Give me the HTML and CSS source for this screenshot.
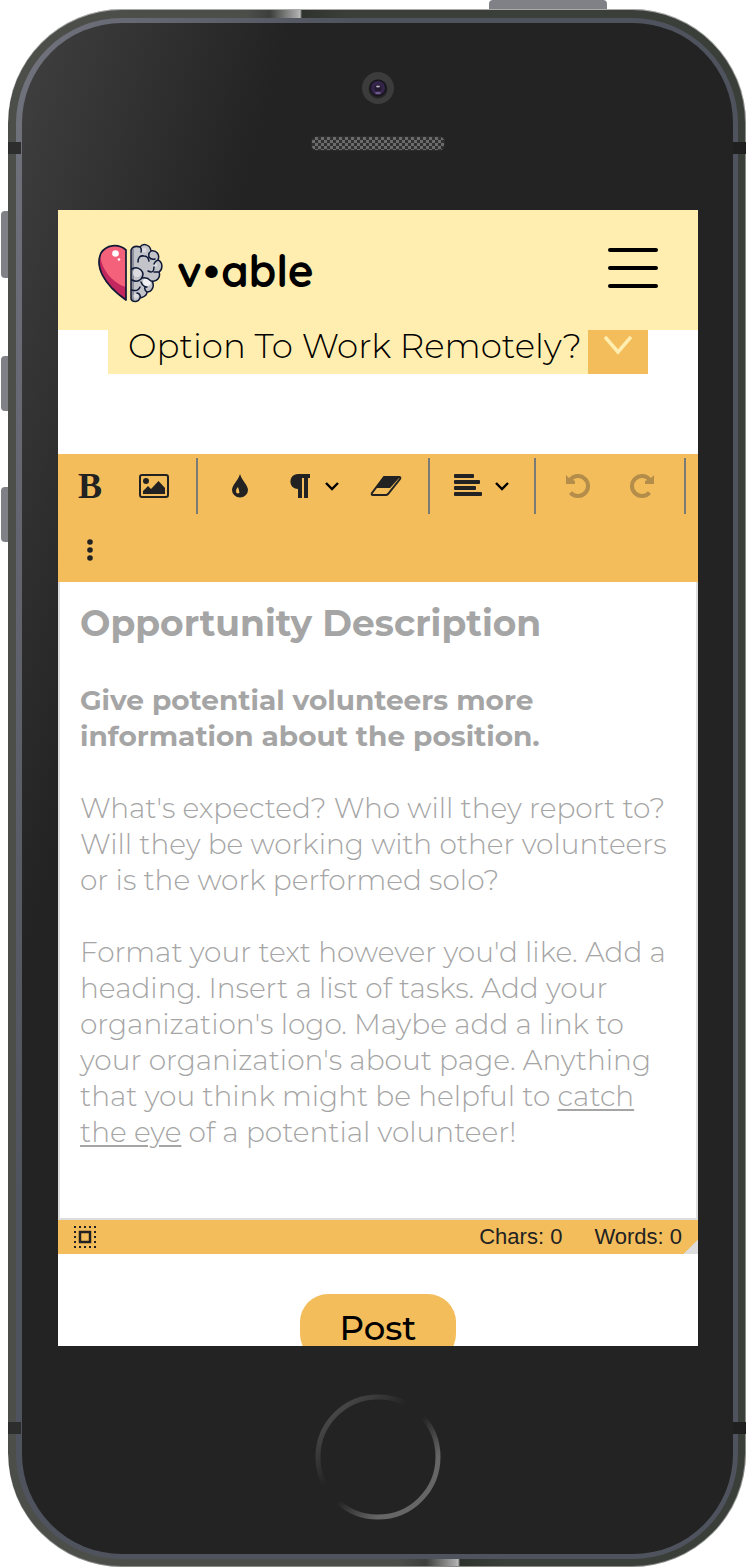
FILE: index.html
```html
<!DOCTYPE html>
<html lang="en">
<head>
<meta charset="utf-8">
<meta name="viewport" content="width=device-width, initial-scale=1">
<title>v•able – Post an opportunity</title>
<link rel="stylesheet" href="styles.css">
</head>
<body>
<div class="device">
  <span class="key key-power"></span>
  <span class="key key-mute"></span>
  <span class="key key-up"></span>
  <span class="key key-down"></span>
  <div class="ring">
    <div class="face">
      <div class="earpiece">
        <svg class="camera" viewBox="0 0 32 32" aria-hidden="true">
          <circle cx="16" cy="16" r="16" fill="#3c3c3c"/>
          <circle cx="16" cy="17" r="9.5" fill="#252427"/>
          <circle cx="16" cy="16" r="8.5" fill="#17151c"/>
          <circle cx="16" cy="16" r="7" fill="#35254d"/>
          <circle cx="16" cy="16" r="3.5" fill="#231a30"/>
          <ellipse cx="16" cy="21" rx="3" ry="1.3" fill="#6b5885"/>
          <ellipse cx="16" cy="14.5" rx="2" ry="1" fill="#b5aebd"/>
        </svg>
        <span class="speaker"></span>
      </div>
      <div class="screen">
        <header class="topbar">
          <a class="brand" href="#">
            <svg class="logo" viewBox="0 0 64 58" aria-hidden="true">
              <path d="M28 6C20-1 8 1 3 9C-3 22 5 40 28 56Z" fill="#f4617b"/>
              <path d="M2 11C4 27 15 39 28 43V56C6 41-3 24 2 11Z" fill="#c2275e"/>
              <path d="M28 6C20-1 8 1 3 9C-3 22 5 40 28 56Z" fill="none" stroke="#101936" stroke-width="1.7" stroke-linejoin="round"/>
              <circle cx="17.500" cy="9.500" r="3.300" fill="#fff"/><circle cx="21" cy="15.500" r="1.300" fill="#fff"/>
              <path d="M33 6C35 2 39 2 42 3C45-1 52 0 53 7C59 6 62 11 60 16C65 18 65 25 61 28C63 33 59 38 54 37C57 42 54 48 49 48C49 53 44 53 42 54C40 59 34 58 33 55Z" fill="#c3c4ca"/>
              <path d="M33 5H36V57L33 55Z" fill="#8c8f9b"/>
              <circle cx="39" cy="29" r="4" fill="#dcdce0"/><circle cx="49" cy="38" r="4" fill="#f0f0f2"/><circle cx="57" cy="21" r="2" fill="#dcdce0"/><circle cx="46" cy="6" r="2.500" fill="#dcdce0"/><circle cx="38" cy="52" r="2.500" fill="#dcdce0"/>
              <path d="M33 6C35 2 39 2 42 3C45-1 52 0 53 7C59 6 62 11 60 16C65 18 65 25 61 28C63 33 59 38 54 37C57 42 54 48 49 48C49 53 44 53 42 54C40 59 34 58 33 55ZM42 3Q44 5 43 8M53 7Q50 9 51 13Q53 16 57 15M40 18Q40 11 46 12Q50 12 51 17M60 16Q57 17 56 20M50 27Q56 30 56 23M61 28H56M34 25Q39 22 43 26Q47 30 43 35Q39 39 34 36M45 34Q49 33 53 37M43 38Q45 43 49 43M34 46Q40 48 42 43M49 48Q46 46 47 43M42 54Q43 50 39 49" fill="none" stroke="#101936" stroke-width="1.5" stroke-linejoin="round" stroke-linecap="round"/>
            </svg>
            <span class="wordmark">v<span class="dot">•</span>able</span>
          </a>
          <button class="menu" type="button" aria-label="Open menu"><span></span><span></span><span></span></button>
        </header>
        <div class="remote">
          <select class="remote-select" aria-label="Option To Work Remotely?">
            <option>Option To Work Remotely?</option>
          </select>
          <span class="remote-arrow"><svg viewBox="0 0 28 20" aria-hidden="true"><path d="M1 2L14 17L27 2" fill="none" stroke="#ffeeaf" stroke-width="3.5"/></svg></span>
        </div>
        <section class="editor">
          <div class="toolbar" role="toolbar" aria-label="Formatting">
            <button class="tool bold" type="button" aria-label="Bold">B</button>
            <button class="tool" type="button" aria-label="Insert image"><svg width="30" height="24" viewBox="0 0 30 24"><rect x="1" y="1" width="28" height="22" rx="2" fill="none" stroke="#222" stroke-width="2"/><circle cx="7" cy="7" r="3" fill="#222"/><path d="M4 20V17L9 12L12 15L19.500 7L26 14V20Z" fill="#222"/></svg></button>
            <span class="divider"></span>
            <button class="tool" type="button" aria-label="Text color"><svg width="18" height="26" viewBox="0 0 18 26"><path d="M9 1C7 8 1 12 1 17A8 7.500 0 0 0 17 17C17 12 11 8 9 1Z" fill="#222"/><path d="M7 14Q4 17 5.500 20Q7.500 21 8.500 19.500Q8 17 7 14Z" fill="#f3bd5b"/></svg></button>
            <button class="tool split" type="button" aria-label="Paragraph format"><svg width="26" height="24" viewBox="0 0 26 24"><path d="M24 0V4H22V24H18V4H16V24H12V15C2 15 2 0 12 0Z" fill="#222"/></svg><svg width="16" height="10" viewBox="0 0 16 10"><path d="M2 2L8 8L14 2" fill="none" stroke="#000" stroke-width="2.400"/></svg></button>
            <button class="tool" type="button" aria-label="Clear formatting"><svg width="32" height="22" viewBox="0 0 32 22"><path d="M14 2H29Q31 2 30 4L18 19Q17 20 16 20H3Q1 20 2 18Z" fill="none" stroke="#222" stroke-width="2"/><path d="M14 2H30L20 13H6Z" fill="#222"/></svg></button>
            <span class="divider"></span>
            <button class="tool split" type="button" aria-label="Align"><svg width="28" height="24" viewBox="0 0 28 24" fill="#222"><rect width="20" height="4" rx="1"/><rect y="6" width="26" height="4" rx="1"/><rect y="12" width="22" height="4" rx="1"/><rect y="18" width="28" height="4" rx="1"/></svg><svg width="16" height="10" viewBox="0 0 16 10"><path d="M2 2L8 8L14 2" fill="none" stroke="#000" stroke-width="2.400"/></svg></button>
            <span class="divider"></span>
            <button class="tool" type="button" aria-label="Undo" disabled><svg width="24" height="24" viewBox="0 0 24 24"><path d="M4 6A10 10 0 1 1 4.500 18.600" fill="none" stroke="#222" stroke-width="4"/><path d="M0 1L3 4L9 7V10H0Z" fill="#222"/></svg></button>
            <button class="tool" type="button" aria-label="Redo" disabled><svg width="24" height="24" viewBox="0 0 24 24"><path d="M20 6A10 10 0 1 0 19.500 18.600" fill="none" stroke="#222" stroke-width="4"/><path d="M24 1L21 4L15 7V10H24Z" fill="#222"/></svg></button>
            <span class="divider"></span>
            <button class="tool" type="button" aria-label="More"><svg width="6" height="22" viewBox="0 0 6 22" fill="#222"><circle cx="3" cy="3" r="2.800"/><circle cx="3" cy="11" r="2.800"/><circle cx="3" cy="19" r="2.800"/></svg></button>
          </div>
          <div class="page">
            <h1>Opportunity Description</h1>
            <h2>Give potential volunteers more<br>information about the position.</h2>
            <p>What's expected? Who will they report to?<br>Will they be working with other volunteers<br>or is the work performed solo?</p>
            <p>Format your text however you'd like. Add a<br>heading. Insert a list of tasks. Add your<br>organization's logo. Maybe add a link to<br>your organization's about page. Anything<br>that you think might be helpful to <u>catch<br>the eye</u> of a potential volunteer!</p>
          </div>
          <div class="status">
            <svg width="22" height="22" viewBox="0 0 22 22" aria-hidden="true"><path d="M0 1H22M0 21H22" stroke="#222" stroke-width="2" stroke-dasharray="2 3"/><path d="M1 0V22M21 0V22" stroke="#222" stroke-width="2" stroke-dasharray="2 3"/><rect x="6" y="6" width="10" height="10" fill="none" stroke="#222" stroke-width="2.500"/></svg>
            <span class="chars">Chars: 0</span>
            <span>Words: 0</span>
            <span class="grip"></span>
          </div>
        </section>
        <button class="post" type="button">Post</button>
      </div>
      <div class="chin">
        <svg class="home" viewBox="0 0 126 126" aria-hidden="true">
          <defs><linearGradient id="homeRing" x1="0" y1="0" x2="1" y2="1"><stop offset="0.100" stop-color="#4c4c4c"/><stop offset="0.400" stop-color="#232323"/><stop offset="0.520" stop-color="#232323"/><stop offset="0.750" stop-color="#666"/></linearGradient></defs>
          <circle cx="63" cy="63" r="60" fill="none" stroke="url(#homeRing)" stroke-width="5"/>
        </svg>
      </div>
    </div>
  </div>
  <span class="band band-top"></span>
  <span class="band band-bottom"></span>
</div>
</body>
</html>
```
FILE: styles.css
```css
* { box-sizing: border-box; }
body { margin: 0; background: #fff; font-family: Montserrat, Inter, sans-serif; }
button, select { font: inherit; color: inherit; border: 0; margin: 0; padding: 0; background: none; }

.device {
  position: relative;
  margin: 9px 2px 1px 8px;
  padding: 9px 8px 8px;
  border-radius: 114px;
  background:
    linear-gradient(90deg, #4c4e4a 238px, #3c3f3c 262px, #aaa 290px, #bbb 292px, #2e342d 294px, #3b3f3a 340px) top / 100% 50% no-repeat,
    linear-gradient(90deg, #4c4e4a 390px, #3c3f3c 418px, #aaa 448px, #bbb 450px, #2e342d 452px, #3b3f3a 500px) bottom / 100% 50% no-repeat;
  box-shadow: inset 0 1px 0 #a9aaa8, inset -1px 0 0 #8d8f8c, inset 0 -1px 0 #898b87;
}
.ring {
  padding: 5px 5px 5px 6px;
  border-radius: 106px;
  background: linear-gradient(106deg, #72747e, #4f535e 330px);
}
.face {
  border-radius: 100px;
  background: linear-gradient(106deg, #404040, #232323 258px);
}
.key { position: absolute; z-index: -1; background: #808087; border-radius: 4px; }
.key-power { top: -9px; right: 139px; width: 118px; height: 20px; }
.key-mute { top: 202px; left: -7px; width: 14px; height: 67px; }
.key-up { top: 347px; left: -7px; width: 14px; height: 55px; }
.key-down { top: 478px; left: -7px; width: 14px; height: 55px; }
.band {
  position: absolute;
  left: 0;
  right: 0;
  height: 12px;
  background:
    linear-gradient(#2d2d2d, #2d2d2d) left / 13px 100% no-repeat,
    linear-gradient(#202020, #202020) right / 13px 100% no-repeat;
}
.band-top { top: 133px; }
.band-bottom { bottom: 133px; }

.earpiece { display: flex; flex-direction: column; align-items: center; gap: 32px; padding: 49px 0 59px; }
.camera { width: 32px; height: 32px; }
.speaker {
  width: 134px;
  height: 15px;
  border-radius: 5px;
  background: repeating-conic-gradient(#6b6b6b 0 25%, #303030 0 50%) 0 0 / 6px 6px;
  border: 1px solid #2b2b2b;
}
.chin { display: flex; justify-content: center; padding: 48px 0 34px; }
.home { width: 126px; height: 126px; }

.screen {
  display: flex;
  flex-direction: column;
  margin: 0 35px 0 36px;
  aspect-ratio: 640 / 1136;
  min-height: 0;
  overflow: hidden;
  background: #fff;
}
.screen > * { flex: none; }
.topbar {
  position: relative;
  z-index: 1;
  display: flex;
  align-items: center;
  justify-content: space-between;
  height: 120px;
  padding: 0 40px;
  background: #ffeeaf;
}
.brand { display: flex; align-items: center; gap: 15px; color: #000; text-decoration: none; padding-top: 6px; }
.logo { width: 64px; height: 58px; overflow: visible; }
.wordmark { padding-bottom: 4px; font: 700 44px/54px Quicksand, Lato, sans-serif; }
.dot { margin: 0 2px; }
.menu { display: flex; flex-direction: column; gap: 14px; width: 50px; padding-bottom: 4px; }
.menu span { height: 4px; border-radius: 2px; background: #000; }

.remote { display: flex; height: 60px; margin: -16px 50px 80px; background: #ffeeaf; }
.remote-select {
  flex: 1;
  min-width: 0;
  appearance: none;
  padding: 4px 0 0 20px;
  font-size: 34px;
  font-weight: 300;
  color: #000;
}
.remote-arrow { display: flex; align-items: center; justify-content: center; width: 60px; padding-top: 2px; background: #f3bd5b; }
.remote-arrow svg { width: 28px; height: 20px; }

.toolbar { display: flex; flex-wrap: wrap; background: #f3bd5b; }
.tool { display: flex; align-items: center; justify-content: center; width: 64px; height: 64px; }
.tool:disabled { opacity: 0.3; }
.split { width: auto; gap: 12px; padding: 0 14px; }
.bold { font: 700 36px/64px "Liberation Serif", serif; color: #222; }
.divider { width: 2px; height: 56px; margin: 4px 10px; background: #7b7b76; }

.page {
  min-height: 638px;
  padding: 18px 20px 68px;
  border: 2px solid #ddd;
  border-top: 0;
  color: #a5a5a5;
  font-size: 28px;
  font-weight: 300;
  line-height: 36px;
  white-space: nowrap;
}
.page h1 { margin: 0 0 36px; font-size: 36px; font-weight: 700; line-height: 46px; }
.page h2 { margin: 0 0 36px; font-size: 28px; font-weight: 700; line-height: 36px; }
.page p { margin: 0 0 36px; }
.page p:last-child { margin: 0; }
.page u { text-decoration-thickness: 2px; text-underline-offset: 3px; }

.status {
  position: relative;
  display: flex;
  align-items: center;
  gap: 32px;
  height: 34px;
  padding: 0 16px;
  background: #f3bd5b;
  color: #222;
  font: 22px/34px "Liberation Sans", Arial, sans-serif;
}
.chars { margin-left: auto; }
.grip { position: absolute; right: 0; bottom: 0; width: 14px; height: 14px; background: linear-gradient(135deg, transparent 50%, #ddd 50%); }
.post {
  align-self: center;
  width: 156px;
  height: 68px;
  margin-top: 40px;
  border-radius: 28px;
  background: #f3bd5b;
  font-size: 34px;
  font-weight: 500;
  line-height: 34px;
  color: #000;
}
```
